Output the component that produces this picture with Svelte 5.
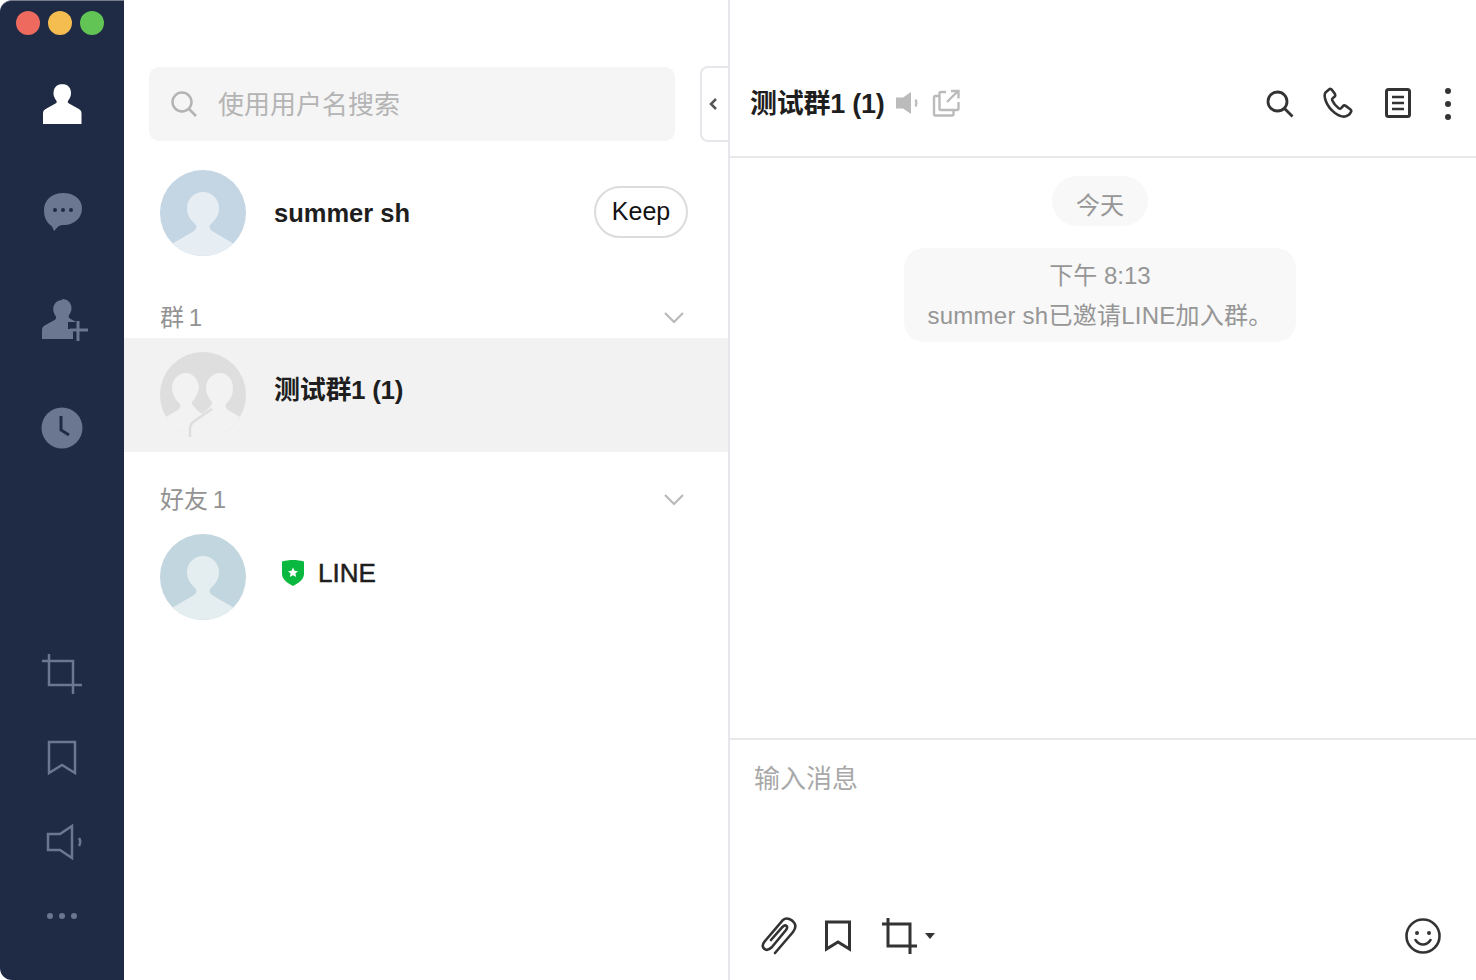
<script lang="ts">
  const groups = [{ name: '测试群1', count: 1 }];
  const friends = [{ name: 'LINE' }];
</script>

<div class="window">
  <nav class="rail">
    <div class="lights">
      <span class="light red"></span>
      <span class="light yellow"></span>
      <span class="light green"></span>
    </div>
    <div class="rail-top">
      <div class="rail-item">
        <svg width="40" height="42" viewBox="0 0 40 42"><path fill="#fff" d="M20 1c6 0 9 4 9 9 0 2-.3 3-1 4.500-.6 1.500-1.500 2.500-2 3.500-.6 1.200 0 2 1 2.600l9 5c2.400 1.400 3.500 2.400 3.500 5V41H1v-10.400c0-2.600 1.100-3.600 3.500-5l9-5c1-.6 1.600-1.400 1-2.600-.5-1-1.400-2-2-3.500-.7-1.500-1-2.500-1-4.500 0-5 3-9 9-9z"/></svg>
      </div>
      <div class="rail-item">
        <svg class="r-chat" width="40" height="40" viewBox="0 0 40 40"><path fill="#6b7690" d="M20 1c11 0 19 6 19 15.500C39 26 31 33 21 33c-2 0-4 .3-5.500 1.200L11 39l-2-4.500C4 31 1 26 1 18 1 8 9 1 20 1z"/><circle cx="12" cy="18" r="2" fill="#1f2a44"/><circle cx="20" cy="18" r="2" fill="#1f2a44"/><circle cx="28" cy="18" r="2" fill="#1f2a44"/></svg>
      </div>
      <div class="rail-item">
        <svg class="r-add" width="48" height="44" viewBox="0 0 48 44"><path fill="#6b7690" d="M21 1c6 0 9.500 4 9.500 9 0 2-.4 3.500-1.200 5-.7 1.400-1.600 2.400-1.600 3.500 0 1 .6 1.700 1.600 2.300l6 3.200H27v7h5v10H1v-9c0-2.500 1-3.500 3.500-5l9-5c1-.6 1.600-1.400 1.600-2.500s-1-2.100-1.700-3.500c-.7-1.500-1.100-3-1.100-5 0-5 3.500-9 9-9z"/><path stroke="#6b7690" stroke-width="3" fill="none" d="M29 32h18M37 23v20"/></svg>
      </div>
      <div class="rail-item">
        <svg width="42" height="42" viewBox="0 0 42 42"><circle cx="21" cy="21" r="20.500" fill="#6b7690"/><path d="M20 9v14l8 5" fill="none" stroke="#1f2a44" stroke-width="3"/></svg>
      </div>
    </div>
    <div class="rail-bottom">
      <div class="rail-item short">
        <svg width="40" height="40" viewBox="0 0 40 40" fill="none" stroke="#6b7690" stroke-width="2.500"><path d="M0 7h31v24M7 0v31h33M31 31v9"/></svg>
      </div>
      <div class="rail-item short">
        <svg width="30" height="36" viewBox="0 0 30 36" fill="none" stroke="#6b7690" stroke-width="2.500"><path d="M2 2h26v31l-13-8-13 8z"/></svg>
      </div>
      <div class="rail-item short">
        <svg class="r-speak" width="38" height="36" viewBox="0 0 38 36" fill="none" stroke="#6b7690" stroke-width="2.500"><path d="M2 10h12L26 2v32l-12-8H2z"/><path d="M33 14c1.500 2.500 1.500 5.500 0 8"/></svg>
      </div>
      <div class="r-more"><i></i><i></i><i></i></div>
    </div>
  </nav>

  <section class="list">
    <div class="search">
      <svg width="28" height="28" viewBox="0 0 28 28" fill="none" stroke="#b4b4b4" stroke-width="2.500"><circle cx="12" cy="12" r="9.500"/><path d="M19 19l7 7"/></svg>
      <span>使用用户名搜索</span>
    </div>
    <div class="collapse">
      <svg width="10" height="14" viewBox="0 0 10 14" fill="none" stroke="#555" stroke-width="2.500"><path d="M8 2L3 7l5 5"/></svg>
    </div>
    <div class="me">
      <svg class="avatar" viewBox="0 0 86 86">
        <circle cx="43" cy="43" r="43" fill="#c4d5e3"/>
        <path fill="#e6edf3" d="M12.600 73.400L34 61C37 59 37 56 35 54C31 50 27 46 27 38C27 29 34 22 43 22C52 22 59 29 59 38C59 46 55 50 51 54C49 56 49 59 52 61L73.400 73.400A43 43 0 0 1 12.600 73.400Z"/>
      </svg>
      <strong>summer sh</strong>
      <button class="keep">Keep</button>
    </div>

    <div class="section-head">
      <span>群 {groups.length}</span>
      <svg width="20" height="12" viewBox="0 0 20 12" fill="none" stroke="#b9b9b9" stroke-width="2.200"><path d="M1 1l9 9 9-9"/></svg>
    </div>
    {#each groups as g}
      <div class="row active">
        <svg class="avatar" viewBox="0 0 86 86">
          <circle cx="43" cy="43" r="43" fill="#dedede"/>
          <path fill="#f2f2f2" d="M6 65L18 58C21 56 21 53 19 51C15 47 12 42 12 36C12 28 18 21 26 21C33 21 39 28 39 36C38 42 35 46 32 50C31 53 36 57 42 62C48 57 53 53 52 50C49 46 46 42 46 36C46 28 52 21 60 21C68 21 73 28 73 36C73 42 71 47 67 51C65 53 65 56 68 58L80 65A43 43 0 0 1 6 65Z"/>
          <path fill="none" stroke="#dedede" stroke-width="2.500" d="M52 57L33 70C31 72 30 73 30 76V85"/>
        </svg>
        <strong class="group-name">{g.name} ({g.count})</strong>
      </div>
    {/each}

    <div class="section-head second">
      <span>好友 {friends.length}</span>
      <svg width="20" height="12" viewBox="0 0 20 12" fill="none" stroke="#b9b9b9" stroke-width="2.200"><path d="M1 1l9 9 9-9"/></svg>
    </div>
    {#each friends as f}
      <div class="row">
        <svg class="avatar" viewBox="0 0 86 86">
          <circle cx="43" cy="43" r="43" fill="#c1d6de"/>
          <path fill="#e4eef1" d="M12.600 73.400L34 61C37 59 37 56 35 54C31 50 27 46 27 38C27 29 34 22 43 22C52 22 59 29 59 38C59 46 55 50 51 54C49 56 49 59 52 61L73.400 73.400A43 43 0 0 1 12.600 73.400Z"/>
        </svg>
        <svg class="shield" width="22" height="26" viewBox="0 0 22 26"><path fill="#09b83e" d="M11 0c4 0 7 .5 11 1.500V14c0 5-5 9-11 12C5 23 0 19 0 14V1.500C4 .5 7 0 11 0z"/><path fill="#fff" d="M11 7.500l1.500 3.300 3.500.4-2.600 2.300.8 3.500-3.200-1.800-3.200 1.800.8-3.500L6 11.200l3.500-.4z"/></svg>
        <strong class="line-name">{f.name}</strong>
      </div>
    {/each}
  </section>

  <section class="chat">
    <header class="chat-head">
      <h1>测试群1 (1)</h1>
      <svg class="mute" width="24" height="24" viewBox="0 0 24 24" fill="#bbb"><path d="M0 6.500h7L15 1v22l-8-5.500H0z"/><path d="M19.500 8.500c1.200 2.300 1.200 4.700 0 7" fill="none" stroke="#bbb" stroke-width="2.200"/></svg>
      <svg class="popout" width="28" height="28" viewBox="0 0 28 28" fill="none" stroke="#bbb" stroke-width="2.400"><path d="M8 7H3.500C2.500 7 2 7.500 2 8.500V25c0 1 .5 1.500 1.500 1.500H20c1 0 1.500-.5 1.500-1.500v-4"/><path d="M14 3H9C8 3 7.500 3.500 7.500 4.500v15c0 1 .5 1.500 1.500 1.500h16c1 0 1.500-.5 1.500-1.500V13"/><path d="M15 13L26 2M19 2h7.500v7.500"/></svg>
      <div class="head-tools">
        <svg class="t-search" width="30" height="30" viewBox="0 0 30 30" fill="none" stroke="#333" stroke-width="2.800"><circle cx="12.500" cy="12.500" r="9.500"/><path d="M19.500 19.500l8 8"/></svg>
        <svg class="t-phone" width="32" height="32" viewBox="0 0 32 32" fill="none" stroke="#333" stroke-width="2.600" stroke-linejoin="round"><path d="M7 2.500l-3.500 3c-1.500 2-1 5 .5 9 2 5 5 8.500 9 11.500 3.500 2.500 7 4 10 3.500 2-.3 5-2.500 6-4.500.5-1 .2-2-.8-2.800l-4.500-3.300c-1-.7-2-.6-2.700.2l-1.800 2c-.7.700-1.700.8-2.500.2-3-2.200-5-4.500-6.500-8-.3-1 0-1.800.7-2.300l1.600-1.300c.8-.7 1-1.700.5-2.700L10 3c-.7-1.200-2-1.500-3-.5z"/></svg>
        <svg class="t-doc" width="26" height="30" viewBox="0 0 26 30" fill="none" stroke="#333"><rect x="1.500" y="1.500" width="23" height="27" rx="2" stroke-width="3"/><path d="M7 9h12M7 15h12M7 21h12" stroke-width="2.500"/></svg>
        <div class="kebab"><i></i><i></i><i></i></div>
      </div>
    </header>

    <div class="messages">
      <div class="pill">今天</div>
      <div class="notice">
        <div>下午 8:13</div>
        <div class="notice-text">summer sh已邀请LINE加入群。</div>
      </div>
    </div>

    <div class="composer">
      <div class="placeholder">输入消息</div>
      <div class="tools">
        <svg width="36" height="38" viewBox="0 0 36 38" fill="none" stroke="#333" stroke-width="2.600" stroke-linecap="round"><path d="M14 36l18-21c3-4 3-7 1-9.500S26-.5 22 3L4 24c-3 3.500-3 5.500-1 7.500s5 1.500 8-1.500L25 13c1.500-2 1.500-3 .5-4s-2.500-.5-4 1L10 23"/></svg>
        <svg class="t-mark" width="26" height="32" viewBox="0 0 26 32" fill="none" stroke="#333" stroke-width="3"><path d="M1.500 2h23v27l-11.500-7-11.500 7z"/></svg>
        <svg class="t-crop" width="36" height="36" viewBox="0 0 36 36" fill="none" stroke="#333" stroke-width="3"><path d="M0 6h28v24M6 0v28h29M28 28v8"/></svg>
        <span class="caret"></span>
        <svg class="smile" width="36" height="36" viewBox="0 0 36 36" fill="none" stroke="#333" stroke-width="2.600"><circle cx="18" cy="18" r="16.500"/><circle cx="12" cy="15" r="2" fill="#333" stroke="none"/><circle cx="24" cy="15" r="2" fill="#333" stroke="none"/><path d="M10.500 22c2 3 4.500 4.500 7.500 4.500s5.500-1.500 7.500-4.500" stroke-linecap="round"/></svg>
      </div>
    </div>
  </section>
</div>

<style>
  :global(body) { background: #fff; }
  svg { display: block; flex: none; }
  .window { display: grid; grid-template-columns: 124px 606px 1fr; width: 1476px; height: 980px; overflow: hidden; font-family: "Liberation Sans", "Noto Sans CJK SC", sans-serif; color: #1e1e1e; }

  .rail { display: flex; flex-direction: column; justify-content: space-between; background: #1f2a44; border-radius: 12px 0 0 12px; border-top: 1px solid #777d8c; box-sizing: border-box; position: relative; }
  .lights { position: absolute; top: 10px; left: 16px; display: flex; gap: 8px; }
  .light { width: 24px; height: 24px; border-radius: 50%; }
  .red { background: #ee6a5f; }
  .yellow { background: #f5bd4f; }
  .green { background: #61c454; }
  .rail-top { padding-top: 49px; }
  .rail-item { height: 108px; display: flex; align-items: center; justify-content: center; }
  .rail-item.short { height: 84px; }
  .r-chat { margin-left: 2px; }
  .r-add { margin-left: 6px; }
  .r-speak { margin-left: 5px; }
  .rail-bottom { padding-bottom: 61px; }
  .r-more { display: flex; justify-content: center; gap: 6px; margin-top: 29px; }
  .r-more i { width: 6px; height: 6px; border-radius: 50%; background: #6b7690; }

  .list { position: relative; border-right: 2px solid #e5e7ea; box-sizing: border-box; padding-top: 67px; }
  .search { display: flex; align-items: center; gap: 20px; margin-left: 25px; width: 526px; height: 74px; box-sizing: border-box; padding-left: 21px; background: #f5f5f5; border-radius: 10px; color: #b4b4b4; font-size: 26px; }
  .search span { margin-bottom: 4px; }
  .collapse { position: absolute; top: 66px; right: 0; width: 28px; height: 76px; box-sizing: border-box; border: 2px solid #e5e7ea; border-right: 0; border-radius: 8px 0 0 8px; display: flex; align-items: center; justify-content: center; padding-right: 5px; }
  .avatar { width: 86px; height: 86px; }
  .me { display: flex; align-items: center; padding: 29px 40px 0 36px; }
  .me strong { margin-left: 28px; font-size: 25.500px; font-weight: 700; }
  .keep { margin-left: auto; margin-bottom: 2px; width: 94px; height: 52px; background: #fff; border: 2px solid #dcdcdc; border-radius: 26px; font: 25px "Liberation Sans", sans-serif; color: #111; padding: 0 0 2px; }
  .section-head { display: flex; align-items: center; justify-content: space-between; padding: 0 44px 0 36px; height: 36px; margin: 44px 0 2px; color: #939393; font-size: 24px; word-spacing: -2px; }
  .section-head span { margin-bottom: 5px; }
  .section-head.second { margin-top: 30px; }
  .row { display: flex; align-items: center; height: 114px; padding-left: 36px; }
  .row.active { background: #f2f2f2; }
  .group-name { margin: 0 0 16px 28px; font-size: 26px; letter-spacing: -0.300px; }
  .shield { margin-left: 36px; margin-bottom: 8px; }
  .line-name { margin: 0 0 8px 14px; font-size: 26px; font-weight: 400; -webkit-text-stroke: 0.5px #1e1e1e; }

  .chat { display: flex; flex-direction: column; min-width: 0; }
  .chat-head { display: flex; align-items: center; height: 158px; box-sizing: border-box; border-bottom: 2px solid #e8e8e8; padding: 50px 25px 0 20px; }
  .chat-head h1 { margin: 0 0 3px; font-size: 27px; font-weight: 700; letter-spacing: -0.250px; }
  .mute { margin-left: 11px; }
  .popout { margin-left: 12px; }
  .head-tools { display: flex; align-items: center; margin-left: auto; }
  .t-search { margin: 2px 1px 0 0; }
  .t-phone { margin-left: 26px; }
  .t-doc { margin-left: 31px; }
  .kebab { display: flex; flex-direction: column; gap: 7px; margin: 2px 0 0 34px; }
  .kebab i { width: 6px; height: 6px; border-radius: 50%; background: #333; }

  .messages { flex: 1; display: flex; flex-direction: column; align-items: center; padding: 18px 6px 0 0; color: #969696; font-size: 24px; }
  .pill { background: #f8f8f8; border-radius: 26px; height: 50px; line-height: 60px; padding: 0 24px; }
  .notice { margin-top: 22px; background: #f8f8f8; border-radius: 20px; width: 392px; height: 94px; box-sizing: border-box; padding-top: 8px; text-align: center; line-height: 40px; }
  .notice-text { letter-spacing: 0.250px; }

  .composer { height: 242px; box-sizing: border-box; border-top: 2px solid #e8e8e8; padding: 18px 24px 25px; display: flex; flex-direction: column; justify-content: space-between; }
  .placeholder { color: #a8a8a8; font-size: 26px; }
  .tools { display: flex; align-items: center; padding-left: 7px; }
  .t-mark { margin-left: 28px; }
  .t-crop { margin-left: 31px; }
  .caret { margin-left: 7px; border: 5px solid transparent; border-top: 6px solid #333; border-bottom: 0; }
  .smile { margin-left: auto; margin-right: 11px; }
</style>
